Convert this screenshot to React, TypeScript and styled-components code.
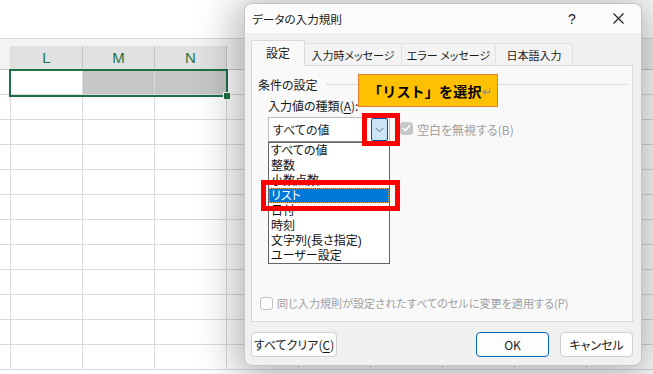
import React from 'react'
import styled, { createGlobalStyle } from 'styled-components'

const GlobalStyle = createGlobalStyle`
  body {
    margin: 0;
    background: #fff;
    font-family: "Noto Sans CJK JP", "Noto Sans", sans-serif;
    font-feature-settings: "palt";
    color: #1b1b1b;
  }
`

// only L, M, N show; the rest lie under the dialog
const COLUMNS = ['', 'L', 'M', 'N', '', '', '', '', '', '']
const SELECTED_COLS = ['L', 'M', 'N']
const ROW_COUNT = 12

const TYPES = ['すべての値', '整数', '小数点数', 'リスト', '日付', '時刻', '文字列(長さ指定)', 'ユーザー設定']

const TABS = [
  { label: '設定', width: 54, active: true },
  { label: '入力時メッセージ', width: 97 },
  { label: 'エラー メッセージ', width: 94 },
  { label: '日本語入力', width: 77 },
]

export default function App() {
  return (
    <Page>
      <GlobalStyle />
      <FormulaArea />
      <HeaderArea>
        {COLUMNS.map((c, i) => (
          <ColHeader key={i} first={i === 0} selected={SELECTED_COLS.includes(c)}>
            {c}
          </ColHeader>
        ))}
      </HeaderArea>
      {Array.from({ length: ROW_COUNT }).map((_, r) => (
        <Row key={r}>
          {COLUMNS.map((c, i) => (
            <Cell key={i} first={i === 0} shaded={r === 0 && (c === 'M' || c === 'N')} />
          ))}
        </Row>
      ))}
      <Selection>
        <FillHandle />
      </Selection>

      <Dialog>
        <TitleBar>
          <Title>データの入力規則</Title>
          <TitleButton>
            <Help>?</Help>
          </TitleButton>
          <TitleButton>
            <svg width="11" height="11" viewBox="0 0 11 11">
              <path d="M0.5 0.5 L10.5 10.5 M10.5 0.5 L0.5 10.5" stroke="#1b1b1b" strokeWidth="1.1" />
            </svg>
          </TitleButton>
        </TitleBar>

        <Body>
          <TabBar>
            {TABS.map((t) => (
              <Tab key={t.label} active={!!t.active} style={{ width: t.width }}>
                <TabLabel active={!!t.active}>{t.label}</TabLabel>
              </Tab>
            ))}
          </TabBar>

          <Panel>
            <GroupHeader>
              <span>条件の設定</span>
              <GroupLine />
            </GroupHeader>
            <FieldLabel>
              入力値の種類(<u>A</u>):
            </FieldLabel>
            <ComboRow>
              <Combo>
                <span>すべての値</span>
                <DropButton>
                  <svg width="9" height="6" viewBox="0 0 9 6">
                    <path d="M0.5 0.8 L4.5 4.8 L8.5 0.8" fill="none" stroke="#5a6b7d" strokeWidth="1" />
                  </svg>
                </DropButton>
              </Combo>
              <CheckBox checked>
                <svg width="9" height="8" viewBox="0 0 9 8">
                  <path d="M1 4 L3.5 6.5 L8 1.2" fill="none" stroke="#fff" strokeWidth="1.4" />
                </svg>
              </CheckBox>
              <DisabledText>空白を無視する(B)</DisabledText>
            </ComboRow>

            <ListBox>
              {TYPES.map((t) => (
                <ListItem key={t} selected={t === 'リスト'}>
                  {t}
                </ListItem>
              ))}
            </ListBox>

            <BottomCheck>
              <CheckBox />
              <DisabledText small>同じ入力規則が設定されたすべてのセルに変更を適用する(P)</DisabledText>
            </BottomCheck>
          </Panel>

          <ButtonRow>
            <Button width={86}>
              すべてクリア(<u>C</u>)
            </Button>
            <ButtonGroup>
              <Button width={73} primary>
                OK
              </Button>
              <Button width={73}>キャンセル</Button>
            </ButtonGroup>
          </ButtonRow>
        </Body>
      </Dialog>

      <Callout>
        「リスト」を選択<Return>↵</Return>
      </Callout>
      <RedFrame style={{ left: 362, top: 113, width: 38, height: 33 }} />
      <RedFrame style={{ left: 261, top: 180, width: 139, height: 31 }} />
    </Page>
  )
}

const Page = styled.div`
  position: relative;
  width: 653px;
  height: 374px;
  overflow: hidden;
  background: #fff;
`

const FormulaArea = styled.div`
  height: 38px;
  border-bottom: 1px solid #d6d6d6;
  background: #fff;
`

const HeaderArea = styled.div`
  display: flex;
  padding-top: 7px;
  background: #f3f3f3;
`

const ColHeader = styled.div<{ first: boolean; selected: boolean }>`
  flex: none;
  box-sizing: border-box;
  width: ${(p) => (p.first ? 11 : 72)}px;
  height: 24px;
  border-right: 1px solid ${(p) => (p.first ? '#dadada' : '#c6c6c6')};
  border-bottom: 1px solid #c6c6c6;
  background: ${(p) => (p.selected ? '#e1e1e1' : '#f3f3f3')};
  color: ${(p) => (p.selected ? '#217346' : '#444')};
  font-family: "Liberation Sans", Arial, sans-serif;
  font-size: 15px;
  display: flex;
  align-items: center;
  justify-content: center;
`

const Row = styled.div`
  display: flex;
`

const Cell = styled.div<{ first: boolean; shaded: boolean }>`
  flex: none;
  box-sizing: border-box;
  width: ${(p) => (p.first ? 11 : 72)}px;
  height: 25px;
  border-right: 1px solid #dadada;
  border-bottom: 1px solid #dadada;
  background: ${(p) => (p.shaded ? '#c6c6c6' : '#fff')};
`

const Selection = styled.div`
  position: absolute;
  left: 9px;
  top: 69px;
  width: 219px;
  height: 28px;
  box-sizing: border-box;
  border: 2px solid #1e7145;
`

const FillHandle = styled.div`
  position: absolute;
  right: -5px;
  bottom: -5px;
  width: 6px;
  height: 6px;
  background: #1e7145;
  border: 1px solid #fff;
`

const Dialog = styled.div`
  position: absolute;
  left: 244px;
  top: 3px;
  width: 398px;
  height: 363px;
  box-sizing: border-box;
  display: flex;
  flex-direction: column;
  background: #f0f0f0;
  border: 1px solid #c4c4c4;
  border-radius: 8px;
  box-shadow: 0 4px 40px 8px rgba(0, 0, 0, 0.3);
  font-size: 12px;
  overflow: hidden;
`

const TitleBar = styled.div`
  display: flex;
  align-items: center;
  height: 29px;
  padding-left: 7px;
  background: #fbfbfb;
`

const Title = styled.div`
  flex: 1;
  font-size: 11.6px;
`

const TitleButton = styled.div`
  width: 46px;
  height: 29px;
  display: flex;
  align-items: center;
  justify-content: center;
`

const Help = styled.span`
  font-family: "Liberation Sans", Arial, sans-serif;
  font-size: 14px;
  color: #1b1b1b;
`

const Body = styled.div`
  flex: 1;
  display: flex;
  flex-direction: column;
  padding: 7px 8px 8px 6px;
`

const TabBar = styled.div`
  display: flex;
  align-items: flex-end;
  height: 25px;
`

const Tab = styled.div<{ active: boolean }>`
  flex: none;
  box-sizing: border-box;
  display: flex;
  align-items: center;
  justify-content: center;
  height: ${(p) => (p.active ? 26 : 22)}px;
  margin-bottom: ${(p) => (p.active ? -1 : 0)}px;
  position: relative;
  z-index: ${(p) => (p.active ? 1 : 0)};
  background: ${(p) => (p.active ? '#f9f9f9' : '#f3f3f3')};
  border: 1px solid ${(p) => (p.active ? '#d9d9d9' : '#e2e2e2')};
  border-bottom: none;
  border-left: ${(p) => (p.active ? '1px solid #d9d9d9' : 'none')};
  border-radius: 2px 2px 0 0;
  padding-bottom: ${(p) => (p.active ? 2 : 0)}px;
`

const TabLabel = styled.span<{ active: boolean }>`
  font-size: ${(p) => (p.active ? 12 : 11)}px;
  line-height: 14px;
  white-space: nowrap;
`

const Panel = styled.div`
  position: relative;
  box-sizing: border-box;
  height: 257px;
  display: flex;
  flex-direction: column;
  padding: 10px 5px 0 6px;
  background: #f9f9f9;
  border: 1px solid #d9d9d9;
`

const GroupHeader = styled.div`
  display: flex;
  align-items: center;
  gap: 8px;
  height: 16px;
`

const GroupLine = styled.div`
  flex: 1;
  height: 1px;
  background: #dcdcdc;
`

const FieldLabel = styled.div`
  margin: 6px 0 0 10px;
  height: 16px;
  line-height: 16px;

  u {
    text-underline-offset: 2px;
  }
`

const ComboRow = styled.div`
  display: flex;
  align-items: center;
  margin: 3px 0 0 10px;
`

const Combo = styled.div`
  box-sizing: border-box;
  width: 122px;
  height: 25px;
  display: flex;
  align-items: center;
  justify-content: space-between;
  padding: 0 1px 0 4px;
  background: #fff;
  border: 1px solid #bdbdbd;
  border-bottom-color: #8a8a8a;
`

const DropButton = styled.div`
  box-sizing: border-box;
  width: 17px;
  height: 23px;
  display: flex;
  align-items: center;
  justify-content: center;
  background: #cce4f7;
  border: 1px solid #005499;
  border-radius: 2px;
`

const CheckBox = styled.div<{ checked?: boolean }>`
  flex: none;
  box-sizing: border-box;
  width: 13px;
  height: 13px;
  display: flex;
  align-items: center;
  justify-content: center;
  border-radius: 3px;
  margin-left: ${(p) => (p.checked ? 10 : 1)}px;
  background: ${(p) => (p.checked ? '#c8c8c8' : '#fdfdfd')};
  border: 1px solid ${(p) => (p.checked ? '#c8c8c8' : '#c2c2c2')};
  margin-top: ${(p) => (p.checked ? -3 : 0)}px;
`

const DisabledText = styled.span<{ small?: boolean }>`
  margin-left: 4px;
  color: #9f9f9f;
  white-space: nowrap;
  font-size: ${(p) => (p.small ? 11.1 : 12)}px;
`

const ListBox = styled.div`
  position: absolute;
  left: 16px;
  top: 76px;
  width: 122px;
  height: 122px;
  box-sizing: border-box;
  background: #fff;
  border: 1px solid #646464;
  z-index: 2;
`

const ListItem = styled.div<{ selected: boolean }>`
  box-sizing: border-box;
  height: 15px;
  line-height: 15px;
  padding: 1px 0 0 2px;
  font-family: "Liberation Sans", "Noto Sans CJK JP", sans-serif;
  font-size: 12px;
  white-space: nowrap;
  color: ${(p) => (p.selected ? '#fff' : '#111')};
  background: ${(p) => (p.selected ? '#0078d7' : 'transparent')};
  outline: ${(p) => (p.selected ? '1px dotted #f5a04a' : 'none')};
  outline-offset: -1px;
`

const BottomCheck = styled.div`
  display: flex;
  align-items: center;
  height: 16px;
  margin: auto 0 10px 1px;
`

const ButtonRow = styled.div`
  display: flex;
  justify-content: space-between;
  margin-top: 10px;
`

const ButtonGroup = styled.div`
  display: flex;
  gap: 11px;
`

const Button = styled.div<{ width: number; primary?: boolean }>`
  box-sizing: border-box;
  width: ${(p) => p.width}px;
  height: 25px;
  display: flex;
  align-items: center;
  justify-content: center;
  font-size: 12px;
  background: #fdfdfd;
  border: 1px solid ${(p) => (p.primary ? '#0067c0' : '#d0d0d0')};
  border-radius: 4px;

  u {
    text-underline-offset: 2px;
  }
`

const Callout = styled.div`
  position: absolute;
  left: 358px;
  top: 74px;
  width: 140px;
  height: 33px;
  box-sizing: border-box;
  display: flex;
  align-items: center;
  padding-left: 9px;
  background: #ffc000;
  border: 1px solid #ed7d31;
  font-size: 14px;
  font-weight: bold;
  letter-spacing: 0.2px;
  font-feature-settings: normal;
  color: #000;
  z-index: 5;
`

const Return = styled.span`
  font-weight: normal;
  color: #8a8a8a;
  font-size: 12px;
`

const RedFrame = styled.div`
  position: absolute;
  box-sizing: border-box;
  border: 5px solid #ff0000;
  z-index: 6;
`
